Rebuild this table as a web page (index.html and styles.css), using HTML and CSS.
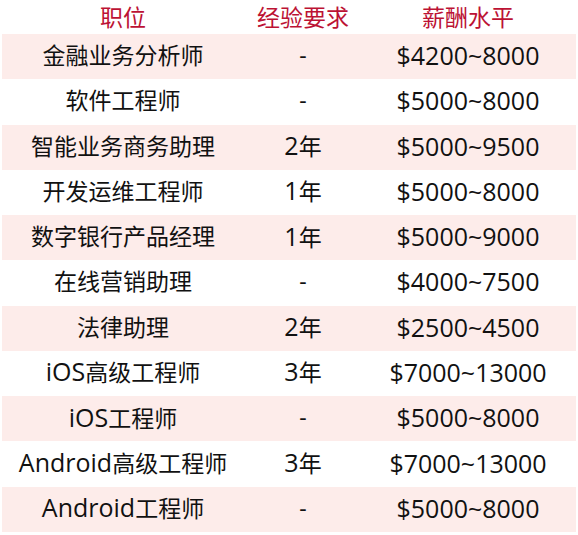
FILE: index.html
```html
<!DOCTYPE html>
<html lang="zh-CN">
<head>
<meta charset="utf-8">
<title>职位列表</title>
<link rel="stylesheet" href="styles.css">
</head>
<body>
<div class="table">
  <div class="row head">
    <div class="c1">职位</div><div class="c2">经验要求</div><div class="c3">薪酬水平</div>
  </div>
  <div class="row odd"><div class="c1">金融业务分析师</div><div class="c2">-</div><div class="c3 en">$4200~8000</div></div>
  <div class="row"><div class="c1">软件工程师</div><div class="c2">-</div><div class="c3 en">$5000~8000</div></div>
  <div class="row odd"><div class="c1">智能业务商务助理</div><div class="c2"><span class="en">2</span>年</div><div class="c3 en">$5000~9500</div></div>
  <div class="row"><div class="c1">开发运维工程师</div><div class="c2"><span class="en">1</span>年</div><div class="c3 en">$5000~8000</div></div>
  <div class="row odd"><div class="c1">数字银行产品经理</div><div class="c2"><span class="en">1</span>年</div><div class="c3 en">$5000~9000</div></div>
  <div class="row"><div class="c1">在线营销助理</div><div class="c2">-</div><div class="c3 en">$4000~7500</div></div>
  <div class="row odd"><div class="c1">法律助理</div><div class="c2"><span class="en">2</span>年</div><div class="c3 en">$2500~4500</div></div>
  <div class="row"><div class="c1"><span class="en">iOS</span>高级工程师</div><div class="c2"><span class="en">3</span>年</div><div class="c3 en">$7000~13000</div></div>
  <div class="row odd"><div class="c1"><span class="en">iOS</span>工程师</div><div class="c2">-</div><div class="c3 en">$5000~8000</div></div>
  <div class="row"><div class="c1"><span class="en">Android</span>高级工程师</div><div class="c2"><span class="en">3</span>年</div><div class="c3 en">$7000~13000</div></div>
  <div class="row odd"><div class="c1"><span class="en">Android</span>工程师</div><div class="c2">-</div><div class="c3 en">$5000~8000</div></div>
</div>
</body>
</html>
```
FILE: styles.css
```css
html, body {
  margin: 0;
  padding: 0;
  background: #ffffff;
}
body {
  font-family: "Open Sans", "Noto Sans CJK SC", sans-serif;
  font-size: 23px;
  color: #111111;
}
.table {
  margin: 0 2px;
  display: flex;
  flex-direction: column;
}
.row {
  display: grid;
  grid-template-columns: 242px 118px 212px;
  height: 45.27px;
  box-sizing: border-box;
  padding-bottom: 3px;
  align-items: center;
  text-align: center;
  white-space: nowrap;
}
.en {
  font-size: 25px;
}
.c1, .c2, .c3 {
  line-height: 30px;
}
.row.head {
  height: 34px;
  padding-bottom: 1px;
  color: #bc1234;
}
.row.odd {
  background: #fdecea;
}
```
